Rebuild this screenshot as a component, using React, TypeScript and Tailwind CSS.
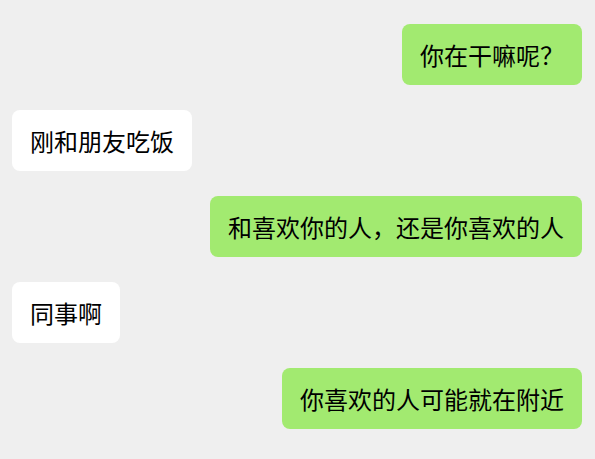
import React from 'react';

interface Message {
  id: number;
  text: string;
  mine: boolean;
}

const messages: Message[] = [
  { id: 1, text: '你在干嘛呢？', mine: true },
  { id: 2, text: '刚和朋友吃饭', mine: false },
  { id: 3, text: '和喜欢你的人，还是你喜欢的人', mine: true },
  { id: 4, text: '同事啊', mine: false },
  { id: 5, text: '你喜欢的人可能就在附近', mine: true },
];

export default function App() {
  return (
    <div
      className="min-h-[459px] w-full bg-[#efefef] pt-[24px] pl-[12px] pr-[13px] flex flex-col gap-[25px]"
      style={{ fontFamily: '"Noto Sans CJK SC", "Noto Sans", sans-serif' }}
    >
      {messages.map((m) => (
        <div key={m.id} className={`flex ${m.mine ? 'justify-end' : 'justify-start'}`}>
          <div
            className={`rounded-[8px] px-[18px] py-[18px] text-[24px] leading-[25px] text-black whitespace-nowrap ${
              m.mine ? 'bg-[#a2ea70]' : 'bg-white'
            }`}
          >
            {m.text}
          </div>
        </div>
      ))}
    </div>
  );
}
